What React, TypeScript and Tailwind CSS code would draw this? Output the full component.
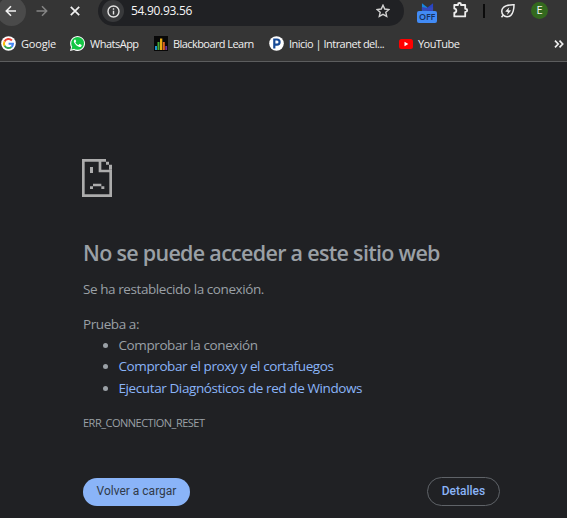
import type { ReactNode } from "react";

function Bookmark({ icon, label, className }: { icon: ReactNode; label: string; className: string }) {
  return (
    <div className="flex h-4 shrink-0 items-center gap-[5px]">
      {icon}
      <span className={`whitespace-nowrap text-[11px] leading-4 text-[#f0f0f0] ${className}`}>{label}</span>
    </div>
  );
}

function GoogleIcon() {
  return (
    <svg width="15" height="15" viewBox="0 0 15 15">
      <circle cx="7.5" cy="7.5" r="7.3" fill="#fff" />
      <g fill="none" strokeWidth="2">
        <path d="M10.9 4.5A4.5 4.5 0 0 0 3.5 5.5" stroke="#ea4335" />
        <path d="M3.5 5.4A4.5 4.5 0 0 0 3.5 9.7" stroke="#fbbc05" />
        <path d="M3.5 9.6A4.5 4.5 0 0 0 10.5 10.9" stroke="#34a853" />
        <path d="M10.5 10.9A4.5 4.5 0 0 0 12 7.7H7.6" stroke="#4285f4" />
      </g>
    </svg>
  );
}

function WhatsAppIcon() {
  return (
    <svg width="15" height="15" viewBox="0 0 24 24">
      <path d="M0 24l1.7-6.2A11.9 11.9 0 1 1 6.3 22.400z" fill="#fff" />
      <circle cx="12.200" cy="11.800" r="10.200" fill="#13c644" />
      <path d="M2.300 21.700l1.300-5.200 3.800 3.900z" fill="#13c644" />
      <path
        d="M8.700 5.800c-.5-.5-1-.4-1.500.1-1.500 1.500-1.300 3.500-.1 5.400 2 3.200 4.300 5.300 7.800 6.200 1.500.4 3.200-.6 3.600-1.900.3-1 .1-1.300-.5-1.600l-2.300-1.100c-.5-.2-.8 0-1.100.4l-.8 1c-.3.3-.6.3-1 .1-1.900-.9-3.200-2.100-4-3.700-.2-.4 0-.7.3-1l.6-.8c.2-.3.2-.5.1-.9z"
        fill="#fff"
      />
    </svg>
  );
}

function BlackboardIcon() {
  return (
    <svg width="14" height="15" viewBox="0 0 14 15">
      <path d="M0 0h14v15H0z" fill="#080808" />
      <path d="M1 10h2v4H1z" fill="#1995cf" />
      <path d="M3.500 6h2v8h-2z" fill="#45a735" />
      <path d="M6 2.500h2.300V14H6z" fill="#e7ab13" />
      <path d="M8.800 6h2v8h-2z" fill="#df6220" />
      <path d="M11.300 10h1.800v4h-1.800z" fill="#70329a" />
    </svg>
  );
}

function IntranetIcon() {
  return (
    <svg width="15" height="15" viewBox="0 0 15 15">
      <circle cx="7.500" cy="7.500" r="7.300" fill="#fff" />
      <path d="M5.300 12.500V3.500h2.700a2.600 2.600 0 0 1 0 5.200H5.300" fill="none" stroke="#174a96" strokeWidth="2.200" />
    </svg>
  );
}

function YouTubeIcon() {
  return (
    <svg width="14" height="10" viewBox="0 0 14 10">
      <rect width="14" height="10" rx="2.500" fill="#f00" />
      <path d="M5.500 2.800v4.400L9.300 5z" fill="#fff" />
    </svg>
  );
}

function Toolbar() {
  return (
    <div className="flex h-[26px] items-start overflow-hidden">
      <div className="-mt-[3px] -ml-[3px] flex h-[29px] w-[29px] shrink-0 items-center justify-center rounded-full bg-[#4a4a4a]">
        <svg width="12" height="12" viewBox="0 0 12 12" fill="none" stroke="#f1f1f1" strokeWidth="1.600" className="-mt-[1px] -ml-[2px]">
          <path d="M11 6H1.500M6 1.300L1.300 6 6 10.700" />
        </svg>
      </div>
      <svg width="12" height="12" viewBox="0 0 12 12" fill="none" stroke="#858585" strokeWidth="1.500" className="mt-[5px] ml-[10px] shrink-0">
        <path d="M.5 6h10M6 1.300L10.700 6 6 10.700" />
      </svg>
      <svg width="10" height="10" viewBox="0 0 10 10" fill="none" stroke="#f1f1f1" strokeWidth="1.700" className="mt-[6px] ml-[22px] shrink-0">
        <path d="M.8.8l8.400 8.400M9.200.8L.8 9.200" />
      </svg>
      <div className="-mt-[4px] ml-[18px] flex h-[30px] w-[306px] shrink-0 items-center rounded-full bg-[#202124] pl-1">
        <div className="flex h-[22px] w-[22px] items-center justify-center rounded-full bg-[#38393b]">
          <svg width="13" height="13" viewBox="0 0 13 13" fill="none" stroke="#e3e3e3" strokeWidth="1.400">
            <circle cx="6.500" cy="6.500" r="5.500" />
            <path d="M6.500 5.800v3.700M6.500 3.300v1.500" />
          </svg>
        </div>
        <span className="ml-[7px] text-[12px] leading-4 tracking-[-0.3px] text-[#f6f6f6]">54.90.93.56</span>
        <svg width="14" height="14" viewBox="0 0 14 14" fill="none" stroke="#d2d2d2" strokeWidth="1.400" className="mr-[14px] ml-auto">
          <path d="M7 1.200l1.750 3.850 4.200.45-3.150 2.800.9 4.150L7 10.300l-3.700 2.150.9-4.150L1.050 5.500l4.200-.45z" />
        </svg>
      </div>
      <div className="ml-[13px] flex w-5 shrink-0 flex-col items-center pt-[3px]">
        <svg width="13" height="8" viewBox="0 0 14 8">
          <path d="M1 0l6 4.500V8H1z" fill="#1687dd" />
          <path d="M13 0L7 4.500V8h6z" fill="#2744c5" />
          <path d="M1 4l6 1 6-1v4H1z" fill="#3548bc" />
        </svg>
        <span className="flex h-[12px] w-5 items-center justify-center rounded-[2px] bg-[#428bf5] text-[9px] leading-3 font-semibold tracking-[-0.3px] text-[#17325f]">
          OFF
        </span>
      </div>
      <svg width="18" height="18" viewBox="0 0 18 18" fill="none" stroke="#eeeeee" strokeWidth="1.800" strokeLinejoin="round" className="mt-[1px] ml-[15px] shrink-0">
        <path d="M2.300 4H6V3.500a1.500 1.500 0 0 1 3 0V4h4.200v3.800h.5a1.500 1.500 0 0 1 0 3h-.5v4.600H2.300v-3.700c2.700-.2 2.700-3.900 0-4.100z" />
      </svg>
      <span className="mt-[4px] ml-[13px] h-[14px] w-[2px] shrink-0 bg-[#0b0b0b]" />
      <svg width="16" height="16" viewBox="0 0 16 16" fill="none" stroke="#eeeeee" strokeWidth="1.500" className="mt-[3px] ml-[15px] shrink-0">
        <path d="M14 1.800C9.500 1.700 5.500 2.200 3.300 4.500a5.300 5.300 0 0 0 0 7.500 5.300 5.300 0 0 0 7.500.4C13.700 9.600 14 6 14 1.800zM3.500 11.800l-2 2.400" />
        <path d="M9.300 4.200L5.200 8.600l2.700.4-.9 3 4.100-4.400-2.700-.4z" fill="#eeeeee" stroke="none" />
      </svg>
      <div className="mt-[2px] ml-[15px] flex h-[17px] w-[17px] shrink-0 items-center justify-center rounded-full bg-[#33691e] font-['Roboto',sans-serif] text-[10px] text-[#f4f4f4]">
        E
      </div>
    </div>
  );
}

function BookmarksBar() {
  return (
    <div className="flex h-[36px] items-center border-b border-[#5c5d5e] pl-px">
      <Bookmark icon={<GoogleIcon />} label="Google" className="w-[35px] tracking-[-0.2px]" />
      <div className="w-[14px]" />
      <Bookmark icon={<WhatsAppIcon />} label="WhatsApp" className="w-[49px] tracking-[-0.5px]" />
      <div className="w-[15px]" />
      <Bookmark icon={<BlackboardIcon />} label="Blackboard Learn" className="w-[82px] tracking-[-0.57px]" />
      <div className="w-[14px]" />
      <Bookmark icon={<IntranetIcon />} label="Inicio | Intranet del..." className="w-[96px] tracking-[-0.51px]" />
      <div className="w-[14px]" />
      <Bookmark icon={<YouTubeIcon />} label="YouTube" className="tracking-[-0.55px]" />
      <svg width="10" height="8" viewBox="0 0 10 8" fill="none" stroke="#eeeeee" strokeWidth="1.700" className="mr-[3px] ml-auto">
        <path d="M1 .7L4.200 4 1 7.300M5.500.7L8.700 4 5.500 7.300" />
      </svg>
    </div>
  );
}

function SadPage() {
  return (
    <svg width="30" height="38" viewBox="0 0 90 114" fill="#acacac" className="-ml-px">
      <path d="M0 0h72v8H58v24h32v82H0zM8 8v98h74V40H50V8z" fillRule="evenodd" />
      <path d="M72 8h9v9h-9zM81 17h9v15h-9zM24 24h9v18h-9zM33 74h25v8H33zM24 82h9v8h-9zM58 82h9v8h-9z" />
    </svg>
  );
}

export default function App() {
  return (
    <div className="flex h-[518px] w-[567px] flex-col overflow-hidden bg-[#202124] font-['Open_Sans','Noto_Sans',sans-serif]">
      <header className="bg-[#353535]">
        <Toolbar />
        <BookmarksBar />
      </header>
      <main className="flex flex-1 flex-col pt-[97px] pr-[67px] pl-[83px] text-[13.5px] leading-[21px] text-[#9aa0a6]">
        <SadPage />
        <h1 className="mt-[42px] text-[21.5px] leading-[28px] font-semibold tracking-[-0.7px] whitespace-nowrap">
          No se puede acceder a este sitio web
        </h1>
        <p className="mt-[12px] tracking-[-0.42px]">Se ha restablecido la conexión.</p>
        <p className="mt-[14px] tracking-[-0.42px]">Prueba a:</p>
        <ul className="list-disc pl-[35.5px] leading-[21.4px] tracking-[-0.4px]">
          <li>Comprobar la conexión</li>
          <li className="text-[#8ab4f8] marker:text-[#9aa0a6]">Comprobar el proxy y el cortafuegos</li>
          <li className="text-[#8ab4f8] marker:text-[#9aa0a6]">Ejecutar Diagnósticos de red de Windows</li>
        </ul>
        <p className="mt-[13px] text-[11px] tracking-[-0.5px]">ERR_CONNECTION_RESET</p>
        <div className="mt-[44px] flex items-center justify-between font-['Roboto',sans-serif] text-[12px]">
          <button className="h-7 w-[107px] rounded-full bg-[#8ab4f8] text-[#303a49]">Volver a cargar</button>
          <button className="h-[29px] w-[73px] rounded-full border border-[#5f6368] font-medium text-[#8ab4f8]">Detalles</button>
        </div>
      </main>
    </div>
  );
}
